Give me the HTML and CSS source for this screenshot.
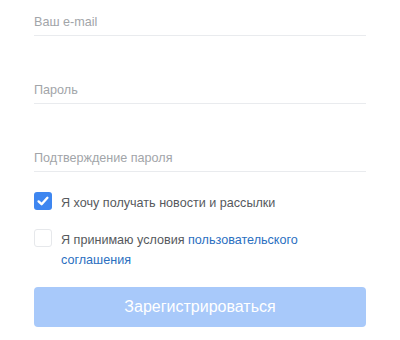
FILE: index.html
```html
<!DOCTYPE html>
<html lang="ru">
<head>
<meta charset="utf-8">
<link rel="stylesheet" href="styles.css">
</head>
<body>
<form class="form">
  <div class="field"><input class="input" type="email" placeholder="Ваш e-mail"></div>
  <div class="field"><input class="input" type="password" placeholder="Пароль"></div>
  <div class="field"><input class="input" type="password" placeholder="Подтверждение пароля"></div>
  <label class="check check-news">
    <span class="box box-on">
      <svg viewBox="0 0 18 18" width="18" height="18"><path d="M4.6 9.4 L7.6 12.2 L13.4 5.8" fill="none" stroke="#fff" stroke-width="2.4" stroke-linecap="round" stroke-linejoin="round"/></svg>
    </span>
    <span class="label">Я хочу получать новости и рассылки</span>
  </label>
  <label class="check check-terms">
    <span class="box"></span>
    <span class="label">Я принимаю условия <a class="link" href="#">пользовательского</a><br><a class="link" href="#">соглашения</a></span>
  </label>
  <button class="submit" type="button">Зарегистрироваться</button>
</form>
</body>
</html>
```
FILE: styles.css
```css
html, body {
  margin: 0;
  padding: 0;
  background: #fff;
}
body {
  font-family: "Liberation Sans", Arial, sans-serif;
  font-size: 12.6px;
  color: #56595d;
}
.form {
  width: 332px;
  padding: 6px 0 0 34px;
  display: flex;
  flex-direction: column;
}
.field {
  height: 29px;
  border-bottom: 1px solid #e9ebee;
  margin-bottom: 38px;
}
.field:nth-child(3) {
  margin-bottom: 20px;
}
.input {
  display: block;
  width: 100%;
  border: 0;
  outline: none;
  padding: 6px 0 0;
  margin: 0;
  height: 20px;
  line-height: 20px;
  font-family: inherit;
  font-size: 12.6px;
  color: #333;
  background: transparent;
  box-sizing: content-box;
}
.input::placeholder {
  color: #a2a5a9;
  opacity: 1;
}
.check {
  display: flex;
  align-items: flex-start;
  gap: 9px;
}
.check-news {
  margin-bottom: 16px;
}
.box {
  flex: none;
  width: 18px;
  height: 18px;
  box-sizing: border-box;
  border: 1px solid #e6e8eb;
  border-radius: 3px;
  background: #fff;
}
.box-on {
  border: 0;
  background: #3e86f0;
}
.box svg {
  display: block;
}
.label {
  padding-top: 1px;
  line-height: 20px;
}
.link {
  color: #2b6fbf;
  text-decoration: none;
}
.submit {
  margin-top: 17px;
  height: 40px;
  border: 0;
  border-radius: 4px;
  background: #a8c9fa;
  color: #fff;
  font-family: inherit;
  font-size: 16px;
  padding: 0;
  cursor: pointer;
}
```
